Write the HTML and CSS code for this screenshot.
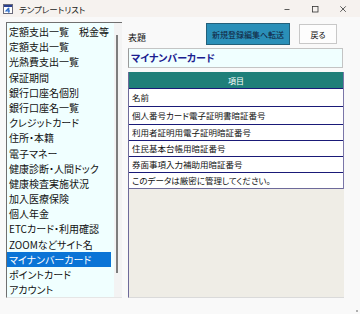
FILE: index.html
```html
<!DOCTYPE html>
<html lang="ja">
<head>
<meta charset="utf-8">
<title>テンプレートリスト</title>
<link rel="stylesheet" href="styles.css">
</head>
<body>
<div class="window">
  <div class="titlebar">
    <svg class="appicon" width="10" height="10" viewBox="0 0 10 10">
      <rect x="0.5" y="0.5" width="9" height="9" fill="#fff" stroke="#6a6a7a"/>
      <rect x="1" y="1" width="8" height="2" fill="#2a3f8f"/>
      <path d="M5.8 3.8 L3 7 H7 M5.8 3.8 V8.8" fill="none" stroke="#2c6cc8" stroke-width="1.2"/>
    </svg>
    <span class="title">テンプレートリスト</span>
    <div class="controls">
      <div class="ctl"><svg width="8" height="8" viewBox="0 0 8 8"><path d="M1.5 4.5 H6.5" stroke="#333" stroke-width="0.8"/></svg></div>
      <div class="ctl"><svg width="8" height="8" viewBox="0 0 8 8"><rect x="1.5" y="1.5" width="5.5" height="5.5" fill="none" stroke="#333" stroke-width="0.8"/></svg></div>
      <div class="ctl"><svg width="8" height="8" viewBox="0 0 8 8"><path d="M1.3 1.3 L6.8 6.8 M6.8 1.3 L1.3 6.8" stroke="#333" stroke-width="0.8"/></svg></div>
    </div>
  </div>
  <div class="client">
    <div class="listbox">
      <ul class="items">
        <li>定額支出一覧　税金等</li>
        <li>定額支出一覧</li>
        <li>光熱費支出一覧</li>
        <li>保証期間</li>
        <li>銀行口座名個別</li>
        <li>銀行口座名一覧</li>
        <li>クレジットカード</li>
        <li>住所・本籍</li>
        <li>電子マネー</li>
        <li>健康診断・人間ドック</li>
        <li>健康検査実施状況</li>
        <li>加入医療保険</li>
        <li>個人年金</li>
        <li>ETCカード・利用確認</li>
        <li>ZOOMなどサイト名</li>
        <li class="selected">マイナンバーカード</li>
        <li>ポイントカード</li>
        <li>アカウント</li>
      </ul>
      <div class="scrolltrack"><div class="thumb"></div></div>
    </div>
    <div class="right">
      <div class="toprow">
        <span class="label">表題</span>
        <button class="btn primary">新規登録編集へ転送</button>
        <button class="btn back">戻る</button>
      </div>
      <div class="titlebox">マイナンバーカード</div>
      <div class="panel">
        <div class="table">
          <div class="head">項目</div>
          <div class="row r1">名前</div>
          <div class="row r1">個人番号カード電子証明書暗証番号</div>
          <div class="row">利用者証明用電子証明暗証番号</div>
          <div class="row">住民基本台帳用暗証番号</div>
          <div class="row">券面事項入力補助用暗証番号</div>
          <div class="row last">このデータは厳密に管理してください。</div>
        </div>
      </div>
    </div>
  </div>
  <div class="grip"></div>
</div>
</body>
</html>
```

FILE: styles.css
```css
* { box-sizing: border-box; }
html, body { margin: 0; padding: 0; }
body {
  width: 360px;
  height: 314px;
  overflow: hidden;
  font-family: "Noto Sans CJK JP", "Noto Sans", sans-serif;
  font-feature-settings: "palt";
  color: #111;
}
.window {
  width: 360px;
  height: 314px;
  background: #f9f9f9;
  position: relative;
}
.titlebar {
  height: 17px;
  display: flex;
  align-items: center;
  background: #f6f2ef;
  padding-left: 3px;
}
.appicon { display: block; margin-top: 1px; }
.title {
  margin-left: 6px;
  font-size: 8.5px;
  color: #222;
  margin-top: 1px;
}
.controls {
  margin-left: auto;
  display: flex;
  margin-right: 3px;
}
.ctl {
  width: 28px;
  height: 17px;
  display: flex;
  align-items: center;
  justify-content: center;
}
.ctl svg { display: block; }
.client {
  display: flex;
  padding: 5px 0 0 6px;
  gap: 6px;
}
.listbox {
  width: 116px;
  height: 276px;
  background: #f0ffff;
  border-top: 1px solid #707070;
  border-left: 1px solid #707070;
  border-bottom: 1px solid #e6e6e6;
  display: flex;
}
.items {
  list-style: none;
  margin: 0;
  padding: 1px 3px 0 0;
  flex: 1;
}
.items li {
  height: 15.2px;
  line-height: 15.2px;
  font-size: 10px;
  padding-left: 2px;
  white-space: nowrap;
  color: #111;
}
.items li.selected {
  background: #0a74d6;
  color: #fff;
}
.scrolltrack {
  width: 8px;
  background: #f3f3f3;
  padding-top: 12px;
}
.thumb {
  width: 2px;
  height: 238px;
  margin-left: 2px;
  background: #7d7d7d;
}
.right {
  width: 216px;
  display: flex;
  flex-direction: column;
}
.toprow {
  height: 26px;
  display: flex;
  align-items: flex-start;
}
.label {
  flex: 1;
  font-size: 9px;
  margin-top: 10px;
  line-height: 12px;
}
.btn {
  font-family: inherit;
  font-feature-settings: "palt";
  font-size: 8px;
  padding: 0;
  margin: 0;
}
.primary {
  width: 84px;
  height: 22px;
  margin-top: 1px;
  background: #2a8fb8;
  border: 1px solid #23607a;
  color: #10203a;
}
.back {
  width: 38px;
  height: 20px;
  margin-top: 2px;
  margin-left: 9px;
  margin-right: 7px;
  background: #fdfdfd;
  border: 1px solid #c8c8c8;
  color: #111;
}
.titlebox {
  width: 215px;
  height: 20px;
  background: #f0ffff;
  border: 1px solid #c4c4c4;
  border-left-color: #9a9a9a;
  font-size: 10px;
  font-weight: bold;
  color: #1a2090;
  line-height: 18px;
  padding-left: 2px;
}
.panel {
  margin-top: 4px;
  width: 216px;
  height: 226px;
  background: #efede6;
  border-left: 1px solid #6e6a9a;
  border-bottom: 1px solid #dadada;
}
.table {
  background: #fff;
  border-right: 1px solid #7a76a8;
}
.head {
  height: 17px;
  background: #1f7f79;
  color: #fff;
  font-size: 8px;
  text-align: center;
  line-height: 17px;
  border-bottom: 1px solid #1a1a78;
}
.row {
  height: 16px;
  font-size: 8.5px;
  line-height: 15px;
  padding-left: 3px;
  border-bottom: 1px solid #1a1a78;
  white-space: nowrap;
}
.row.r1 { height: 18px; line-height: 17px; }
.row.last { border-bottom-color: #6e6a9a; }
.grip {
  position: absolute;
  right: 2px;
  bottom: 2px;
  width: 2px;
  height: 2px;
  background: #b0b0b0;
}
```
